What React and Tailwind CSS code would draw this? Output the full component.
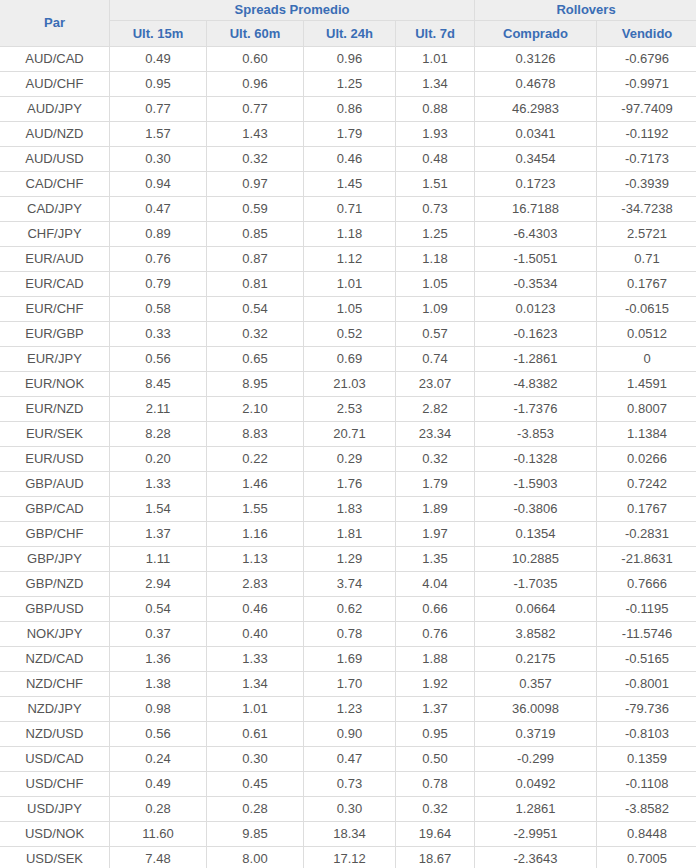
const rows = [
  ["AUD/CAD", "0.49", "0.60", "0.96", "1.01", "0.3126", "-0.6796"],
  ["AUD/CHF", "0.95", "0.96", "1.25", "1.34", "0.4678", "-0.9971"],
  ["AUD/JPY", "0.77", "0.77", "0.86", "0.88", "46.2983", "-97.7409"],
  ["AUD/NZD", "1.57", "1.43", "1.79", "1.93", "0.0341", "-0.1192"],
  ["AUD/USD", "0.30", "0.32", "0.46", "0.48", "0.3454", "-0.7173"],
  ["CAD/CHF", "0.94", "0.97", "1.45", "1.51", "0.1723", "-0.3939"],
  ["CAD/JPY", "0.47", "0.59", "0.71", "0.73", "16.7188", "-34.7238"],
  ["CHF/JPY", "0.89", "0.85", "1.18", "1.25", "-6.4303", "2.5721"],
  ["EUR/AUD", "0.76", "0.87", "1.12", "1.18", "-1.5051", "0.71"],
  ["EUR/CAD", "0.79", "0.81", "1.01", "1.05", "-0.3534", "0.1767"],
  ["EUR/CHF", "0.58", "0.54", "1.05", "1.09", "0.0123", "-0.0615"],
  ["EUR/GBP", "0.33", "0.32", "0.52", "0.57", "-0.1623", "0.0512"],
  ["EUR/JPY", "0.56", "0.65", "0.69", "0.74", "-1.2861", "0"],
  ["EUR/NOK", "8.45", "8.95", "21.03", "23.07", "-4.8382", "1.4591"],
  ["EUR/NZD", "2.11", "2.10", "2.53", "2.82", "-1.7376", "0.8007"],
  ["EUR/SEK", "8.28", "8.83", "20.71", "23.34", "-3.853", "1.1384"],
  ["EUR/USD", "0.20", "0.22", "0.29", "0.32", "-0.1328", "0.0266"],
  ["GBP/AUD", "1.33", "1.46", "1.76", "1.79", "-1.5903", "0.7242"],
  ["GBP/CAD", "1.54", "1.55", "1.83", "1.89", "-0.3806", "0.1767"],
  ["GBP/CHF", "1.37", "1.16", "1.81", "1.97", "0.1354", "-0.2831"],
  ["GBP/JPY", "1.11", "1.13", "1.29", "1.35", "10.2885", "-21.8631"],
  ["GBP/NZD", "2.94", "2.83", "3.74", "4.04", "-1.7035", "0.7666"],
  ["GBP/USD", "0.54", "0.46", "0.62", "0.66", "0.0664", "-0.1195"],
  ["NOK/JPY", "0.37", "0.40", "0.78", "0.76", "3.8582", "-11.5746"],
  ["NZD/CAD", "1.36", "1.33", "1.69", "1.88", "0.2175", "-0.5165"],
  ["NZD/CHF", "1.38", "1.34", "1.70", "1.92", "0.357", "-0.8001"],
  ["NZD/JPY", "0.98", "1.01", "1.23", "1.37", "36.0098", "-79.736"],
  ["NZD/USD", "0.56", "0.61", "0.90", "0.95", "0.3719", "-0.8103"],
  ["USD/CAD", "0.24", "0.30", "0.47", "0.50", "-0.299", "0.1359"],
  ["USD/CHF", "0.49", "0.45", "0.73", "0.78", "0.0492", "-0.1108"],
  ["USD/JPY", "0.28", "0.28", "0.30", "0.32", "1.2861", "-3.8582"],
  ["USD/NOK", "11.60", "9.85", "18.34", "19.64", "-2.9951", "0.8448"],
  ["USD/SEK", "7.48", "8.00", "17.12", "18.67", "-2.3643", "0.7005"],
]

const th = "border border-[#dddddd] bg-[#eeeeee] text-[#3a6db5] font-bold text-[13px] text-center p-0"
const td = "border border-[#dddddd] text-[#555555] text-[13px] text-center p-0 h-[25px]"

export default function App() {
  return (
    <div className="w-[696px] h-[868px] overflow-hidden bg-white" style={{ fontFamily: '"Liberation Sans", Arial, sans-serif' }}>
      <table className="border-collapse table-fixed w-[698px] -ml-px -mt-px">
        <colgroup>
          <col className="w-[110px]" />
          <col className="w-[97px]" />
          <col className="w-[97px]" />
          <col className="w-[92px]" />
          <col className="w-[79px]" />
          <col className="w-[122px]" />
          <col className="w-[101px]" />
        </colgroup>
        <thead>
          <tr>
            <th rowSpan={2} className={th}>Par</th>
            <th colSpan={4} className={th + " h-[21px]"}>Spreads Promedio</th>
            <th colSpan={2} className={th}>Rollovers</th>
          </tr>
          <tr>
            <th className={th + " h-[26px]"}>Ult. 15m</th>
            <th className={th}>Ult. 60m</th>
            <th className={th}>Ult. 24h</th>
            <th className={th}>Ult. 7d</th>
            <th className={th}>Comprado</th>
            <th className={th}>Vendido</th>
          </tr>
        </thead>
        <tbody>
          {rows.map((r) => (
            <tr key={r[0]}>
              {r.map((c, i) => (
                <td key={i} className={td}>{c}</td>
              ))}
            </tr>
          ))}
        </tbody>
      </table>
    </div>
  )
}
